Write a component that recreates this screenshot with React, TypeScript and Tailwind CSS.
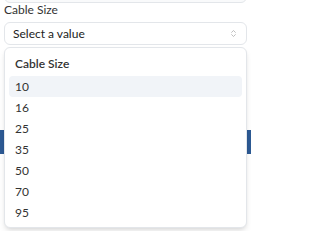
import { ChevronsUpDown } from "lucide-react";

const sizes = ["10", "16", "25", "35", "50", "70", "95"];

export default function App() {
  return (
    <div className="relative h-[231px] w-[251px] overflow-hidden bg-white font-['Lato',sans-serif] text-[12px] text-[#333]">
      {/* Page behind the popover */}
      <div className="flex flex-col">
        <div className="mx-[4px] -mt-[20px] h-[23px] rounded-md border border-[#e3e6ea] bg-[#f9fafb]" />
        <div className="mx-[4px] mt-[-1px] h-[16px] leading-[16px] text-[#333]">Cable Size</div>
        <button className="mx-[4px] mt-[4px] flex h-[23px] items-center justify-between rounded-md border border-[#e3e6ea] bg-white px-[8px] text-left text-[#222]">
          <span>Select a value</span>
          <ChevronsUpDown className="h-[9px] w-[9px] text-[#aaa]" strokeWidth={2} />
        </button>
        <div className="mt-[85px] h-[24px] bg-[#2d5a94]" />
      </div>

      {/* Popover */}
      <div className="absolute left-[4px] right-[4px] top-[47px] rounded-md border border-[#e3e6ea] bg-white p-[4px] shadow-md">
        <div className="flex h-[24px] items-center px-[6px] font-semibold text-[#333]">Cable Size</div>
        {sizes.map((s, i) => (
          <div
            key={s}
            className={
              i === 0
                ? "flex h-[21px] items-center rounded-sm bg-[#f1f4f8] px-[6px] text-[#333]"
                : "flex h-[21px] items-center rounded-sm px-[6px] text-[#333]"
            }
          >
            {s}
          </div>
        ))}
      </div>
    </div>
  );
}
